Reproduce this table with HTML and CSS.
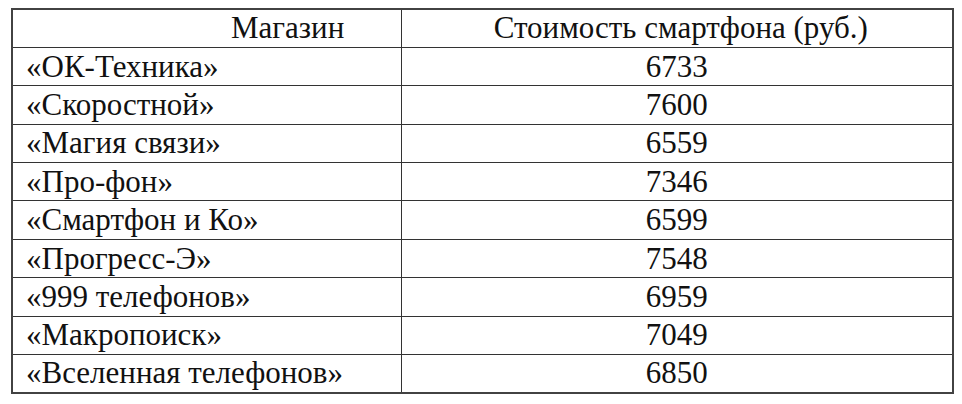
FILE: index.html
```html
<!DOCTYPE html>
<html lang="ru">
<head>
<meta charset="utf-8">
<title>t</title>
<link rel="stylesheet" href="styles.css">
</head>
<body class="page">
<table class="prices">
  <thead>
    <tr>
      <th class="cell shop-head">Магазин</th>
      <th class="cell price-head">Стоимость смартфона (руб.)</th>
    </tr>
  </thead>
  <tbody>
    <tr><td class="cell shop">&laquo;ОК-Техника&raquo;</td><td class="cell price">6733</td></tr>
    <tr><td class="cell shop">&laquo;Скоростной&raquo;</td><td class="cell price">7600</td></tr>
    <tr><td class="cell shop">&laquo;Магия связи&raquo;</td><td class="cell price">6559</td></tr>
    <tr><td class="cell shop">&laquo;Про-фон&raquo;</td><td class="cell price">7346</td></tr>
    <tr><td class="cell shop">&laquo;Смартфон и Ко&raquo;</td><td class="cell price">6599</td></tr>
    <tr><td class="cell shop">&laquo;Прогресс-Э&raquo;</td><td class="cell price">7548</td></tr>
    <tr><td class="cell shop">&laquo;999 телефонов&raquo;</td><td class="cell price">6959</td></tr>
    <tr><td class="cell shop">&laquo;Макропоиск&raquo;</td><td class="cell price">7049</td></tr>
    <tr><td class="cell shop">&laquo;Вселенная телефонов&raquo;</td><td class="cell price">6850</td></tr>
  </tbody>
</table>
</body>
</html>
```
FILE: styles.css
```css
.page {
  margin: 0;
  padding: 8px 0 0 11px;
  background: #ffffff;
  font-family: "Liberation Serif", Tinos, "Times New Roman", Times, serif;
  font-size: 31px;
  color: #111111;
}

.prices {
  border-collapse: collapse;
  border: 2px solid #424242;
  table-layout: fixed;
  width: 943px;
}

.cell {
  font-family: "Liberation Serif", Tinos, "Times New Roman", Times, serif;
  font-size: 31px;
  font-weight: 400;
  color: #111111;
  border: 1px solid #333333;
  box-sizing: border-box;
  height: 38.4px;
  padding: 0;
  line-height: 36px;
  white-space: nowrap;
}

.shop-head {
  width: 389px;
  text-align: left;
  padding-left: 218px;
}

.price-head {
  text-align: center;
  padding-left: 8px;
}

.shop {
  text-align: left;
  padding-left: 13px;
}

.price {
  text-align: center;
}
```
